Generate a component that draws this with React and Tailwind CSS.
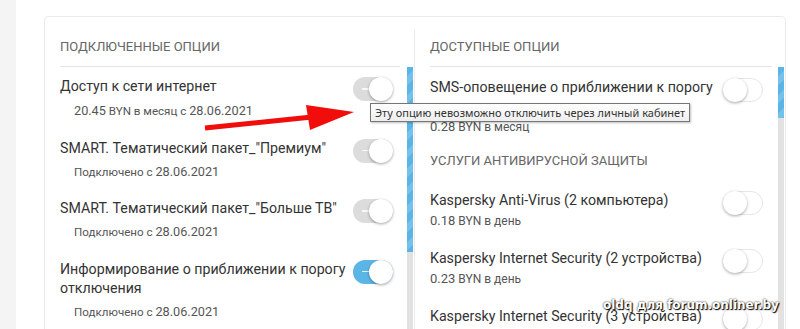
import React from "react";

const connected = [
  {
    title: "Доступ к сети интернет",
    sub: [
      ["20.45", "num"],
      [" BYN в месяц с ", "txt"],
      ["28.06.2021", "num"],
    ],
    toggle: "locked",
    first: true,
  },
  {
    title: 'SMART. Тематический пакет_"Премиум"',
    sub: [
      ["Подключено с ", "txt"],
      ["28.06.2021", "num"],
    ],
    toggle: "locked",
  },
  {
    title: 'SMART. Тематический пакет_"Больше ТВ"',
    sub: [
      ["Подключено с ", "txt"],
      ["28.06.2021", "num"],
    ],
    toggle: "locked",
  },
  {
    title: "Информирование о приближении к порогу отключения",
    sub: [
      ["Подключено с ", "txt"],
      ["28.06.2021", "num"],
    ],
    toggle: "on",
  },
];

const antivirus = [
  { title: "Kaspersky Anti-Virus (2 компьютера)", price: "0.18", unit: " BYN в день" },
  { title: "Kaspersky Internet Security (2 устройства)", price: "0.23", unit: " BYN в день" },
  { title: "Kaspersky Internet Security (3 устройства)", price: "0.28", unit: " BYN в день" },
];

function Toggle({ state }) {
  if (state === "off") {
    return (
      <div className="relative w-[40px] h-[24px] shrink-0 rounded-full border border-[#e6e6e6] bg-white">
        <div className="absolute left-[-1px] top-[-1px] w-[24px] h-[24px] rounded-full bg-white shadow-[0_1px_3px_rgba(0,0,0,0.35)]" />
      </div>
    );
  }
  const track = state === "on" ? "bg-[#5bb6e6]" : "bg-[#dcdcdc]";
  return (
    <div className={"relative w-[40px] h-[24px] shrink-0 rounded-full " + track}>
      <div className="absolute left-[9px] top-[11px] w-[7px] h-[1.5px] bg-white/80" />
      <div className="absolute right-0 top-0 w-[24px] h-[24px] rounded-full bg-white shadow-[0_1px_3px_rgba(0,0,0,0.35)]" />
    </div>
  );
}

function Scrollbar({ thumb }) {
  return (
    <div className="w-[6px] shrink-0 bg-[#e2e2e2]">
      <div
        className={
          "w-full bg-[repeating-linear-gradient(135deg,#5ab5e6_0px,#5ab5e6_7px,#74c2ec_7px,#74c2ec_13px)] " +
          thumb
        }
      />
    </div>
  );
}

function Header({ children, width }) {
  return (
    <div
      className={
        "h-[50px] flex items-end pb-[11px] border-b border-[#e6e6e6] text-[13px] leading-[16px] text-[#666] uppercase " +
        width
      }
    >
      {children}
    </div>
  );
}

export default function App() {
  return (
    <div className="relative w-[800px] h-[329px] overflow-hidden flex bg-white font-['Roboto',sans-serif] text-[#333]">
      <div className="w-[16px] shrink-0 bg-[#f4f4f4]" />
      <div className="flex-1 pt-[16px] pl-[28px] pr-[14px]">
        <div className="flex h-[400px] rounded-[4px] border border-[#ebebeb]">
          {/* left column */}
          <div className="w-[369px] shrink-0 pl-[15px] flex flex-col">
            <Header width="w-[340px]">Подключенные опции</Header>
            <div className="flex flex-1">
              <div className="w-[340px] pt-[10px] pr-[7px] flex flex-col gap-[18.5px]">
                {connected.map((item) => (
                  <div key={item.title} className="flex justify-between items-start">
                    <div className="flex-1 min-w-0 pr-[6px]">
                      <div className="text-[14.2px] leading-[19px]">{item.title}</div>
                      <div
                        className={
                          "h-[20px] pl-[14px] leading-[20px] text-[#555] whitespace-nowrap " +
                          (item.first ? "mt-[4px]" : "mt-[3px]")
                        }
                      >
                        {item.sub.map(([t, k]) => (
                          <span key={t} className={k === "num" ? "text-[12.7px]" : "text-[11.6px]"}>
                            {t}
                          </span>
                        ))}
                      </div>
                    </div>
                    <Toggle state={item.toggle} />
                  </div>
                ))}
              </div>
              <div className="ml-[7px] flex">
                <Scrollbar thumb="h-[185px]" />
              </div>
            </div>
          </div>

          <div className="w-px shrink-0 mt-[13px] bg-[#ebebeb]" />

          {/* right column */}
          <div className="flex-1 pl-[15px] flex flex-col">
            <Header width="w-[342px]">Доступные опции</Header>
            <div className="flex flex-1">
              <div className="w-[342px] pt-[11px] pr-[9px] flex flex-col">
                <div className="flex justify-between items-start">
                  <div className="flex-1 min-w-0 pr-[6px]">
                    <div className="text-[14.2px] leading-[19px]">
                      SMS-оповещение о приближении к порогу отключения
                    </div>
                    <div className="h-[19px] leading-[19px] text-[#555] whitespace-nowrap">
                      <span className="text-[13px]">0.28</span>
                      <span className="text-[12px]"> BYN в месяц</span>
                    </div>
                  </div>
                  <Toggle state="off" />
                </div>
                <div className="mt-[16px] text-[13px] leading-[19px] text-[#666] uppercase">
                  Услуги антивирусной защиты
                </div>
                <div className="mt-[21px] flex flex-col gap-[20px]">
                  {antivirus.map((item) => (
                    <div key={item.title} className="flex justify-between items-start">
                      <div className="flex-1 min-w-0 pr-[6px]">
                        <div className="text-[14.2px] leading-[19px]">{item.title}</div>
                        <div className="h-[19px] leading-[19px] text-[#555] whitespace-nowrap">
                          <span className="text-[13px]">{item.price}</span>
                          <span className="text-[12px]">{item.unit}</span>
                        </div>
                      </div>
                      <Toggle state="off" />
                    </div>
                  ))}
                </div>
              </div>
              <div className="ml-[6px] flex">
                <Scrollbar thumb="h-[51px]" />
              </div>
            </div>
          </div>
        </div>
      </div>

      {/* red arrow drawn over the page */}
      <svg className="absolute left-0 top-0 pointer-events-none" width="800" height="329">
        <line x1="205" y1="128" x2="312" y2="117" stroke="#f20d0d" strokeWidth="5" />
        <polygon points="306,105 310,130 354,112" fill="#f20d0d" />
      </svg>

      {/* tooltip */}
      <div className="absolute left-[370px] top-[103px] h-[19px] px-[4px] border border-[#767676] bg-[linear-gradient(#ffffff,#eeeeee)] shadow-[1px_1px_2px_rgba(0,0,0,0.25)] font-['Noto_Sans',sans-serif] text-[11px] leading-[17px] text-[#333] whitespace-nowrap">
        Эту опцию невозможно отключить через личный кабинет
      </div>

      {/* watermark */}
      <div className="absolute left-[603px] top-[297px] font-['DejaVu_Sans',sans-serif] font-bold text-[12px] leading-[16px] text-white [text-shadow:0_0_2px_#000,1px_1px_1px_#000]">
        oldq для forum.onliner.by
      </div>
    </div>
  );
}
